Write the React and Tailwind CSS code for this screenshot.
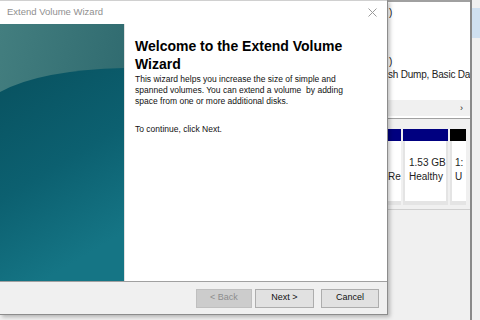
import React from 'react';

const seg = { fontFamily: '"Liberation Sans", Arial, sans-serif' };

// banner picture on the left side of the wizard
const WizardBanner = () => (
  <svg width="124" height="257" viewBox="0 0 124 257" className="block shrink-0">
    <defs>
      <linearGradient id="top" x1="0" y1="0" x2="1" y2="0.4">
        <stop offset="0" stopColor="#437e7f" />
        <stop offset="1" stopColor="#2f6a6f" />
      </linearGradient>
      <linearGradient id="body" x1="0" y1="0" x2="0.35" y2="1">
        <stop offset="0" stopColor="#08515f" />
        <stop offset="0.55" stopColor="#0c6070" />
        <stop offset="1" stopColor="#157585" />
      </linearGradient>
    </defs>
    <rect width="124" height="257" fill="url(#top)" />
    <path d="M0 68 Q40 46 124 44 L124 257 L0 257 Z" fill="url(#body)" />
  </svg>
);

const Btn = ({ children, disabled, w, className = '' }) => (
  <button
    className={
      (disabled
        ? 'border border-[#bfbfbf] bg-[#cccccc] text-[#8d8d8d]'
        : 'border border-[#adadad] bg-[#e1e1e1] text-[#111]') + ' h-[19px] text-[9px] ' + className
    }
    style={{ ...seg, width: w }}
  >
    {children}
  </button>
);

const BackgroundApp = () => (
  <div className="w-[92px] h-full bg-[#f0f0f0] flex" style={seg}>
    <div className="w-[82px] flex flex-col">
      <div className="h-[118px] bg-white border-t-2 border-[#a0a0a0] flex flex-col text-[10px] text-[#222] leading-none">
        <div className="pl-[1px] pt-[6px]">)</div>
        <div className="pl-[1px] pt-[39px]">)</div>
        <div className="pt-[3px] whitespace-nowrap overflow-hidden tracking-[-0.2px]">sh Dump, Basic Data</div>
        <div className="mt-auto h-[16px] bg-[#f0f0f0] flex items-center justify-end pr-[7px] text-[9px] mb-[2px]">›</div>
      </div>
      <div className="h-[1px] bg-[#a0a0a0]" />
      <div className="h-[10px] bg-[#f0f0f0]" />
      <div className="flex h-[76px] gap-[2px] bg-[#f0f0f0] text-[10px] text-[#222] leading-[14px]">
        <div className="w-[13px] flex flex-col">
          <div className="h-[12px] bg-[#000080]" />
          <div className="flex-1 bg-white border-b-4 border-[#e4e4e4] pt-[29px] whitespace-nowrap overflow-hidden">Re</div>
        </div>
        <div className="w-[45px] flex flex-col">
          <div className="h-[12px] bg-[#000080]" />
          <div className="flex-1 bg-white border-l-2 border-r-2 border-b-4 border-[#e4e4e4] pl-[4px] pt-[15px] whitespace-nowrap">
            <div>1.53 GB</div>
            <div>Healthy</div>
          </div>
        </div>
        <div className="w-[16px] flex flex-col">
          <div className="h-[12px] bg-black" />
          <div className="flex-1 bg-white border-l-2 border-b-4 border-[#e4e4e4] pl-[3px] pt-[15px] overflow-hidden">
            <div>1:</div>
            <div>U</div>
          </div>
        </div>
      </div>
      <div className="h-[1px] bg-[#cfcfcf] mt-[4px]" />
      <div className="flex-1 bg-[#f0f0f0]" />
    </div>
    <div className="w-[2px] bg-[#8a8a8a]" />
    <div className="flex-1 bg-[#f0f0f0] flex flex-col">
      <div className="h-[8px]" />
      <div className="h-[30px] bg-[#cfe0f0]" />
    </div>
  </div>
);

export default function App() {
  return (
    <div className="w-[480px] h-[320px] flex bg-[#f0f0f0] overflow-hidden">
      <div className="w-[388px] h-[315px] flex flex-col bg-white border-r border-b border-[#8c8c8c] shadow-[2px_2px_4px_rgba(0,0,0,0.25)] z-10">
        <div className="h-[24px] flex items-center justify-between pl-[7px] pr-[10px] border-t border-[#d0d0d0]">
          <span className="text-[9.5px] text-[#8f8f8f]" style={seg}>Extend Volume Wizard</span>
          <svg width="9" height="9" viewBox="0 0 9 9">
            <path d="M0.5 0.5 L8.5 8.5 M8.5 0.5 L0.5 8.5" stroke="#9a9a9a" strokeWidth="1" />
          </svg>
        </div>
        <div className="h-[257px] flex">
          <WizardBanner />
          <div className="flex-1 pl-[10px] pt-[13px] pr-[20px] border-l border-[#e0e0e0]" style={seg}>
            <h1 className="text-[14px] font-bold leading-[18px] text-black">
              Welcome to the Extend Volume Wizard
            </h1>
            <p className="mt-[1px] text-[8.5px] leading-[11px] text-[#111]">
              This wizard helps you increase the size of simple and spanned volumes. You can extend a volume&nbsp; by adding space from one or more additional disks.
            </p>
            <p className="mt-[17px] text-[8.5px] leading-[11px] text-[#111]">To continue, click Next.</p>
          </div>
        </div>
        <div className="flex-1 bg-[#f0f0f0] border-t border-[#a0a0a0] flex items-center justify-end gap-[3px] pr-[8px]">
          <Btn disabled w={56}>&lt; Back</Btn>
          <Btn w={59}>Next &gt;</Btn>
          <Btn w={58} className="ml-[4px]">Cancel</Btn>
        </div>
      </div>
      <BackgroundApp />
    </div>
  );
}
